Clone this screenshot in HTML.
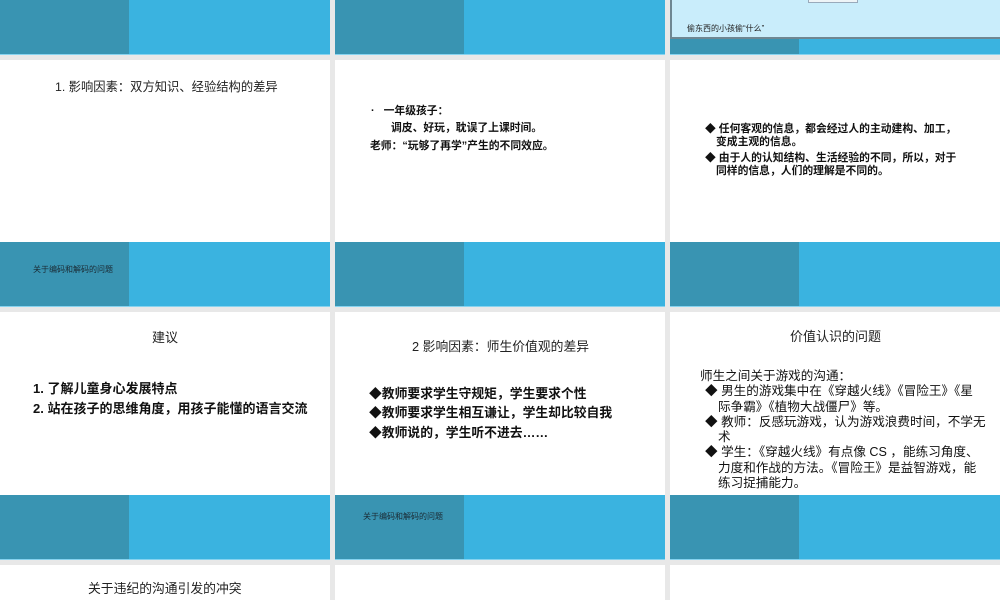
<!DOCTYPE html>
<html><head><meta charset="utf-8"><style>
*{margin:0;padding:0;box-sizing:border-box}
body{width:1000px;height:600px;overflow:hidden;background:#e8e8e8;position:relative;font-family:"Liberation Sans","Noto Sans CJK SC",sans-serif;color:#111}
.s{position:absolute;background:#fff;overflow:hidden}
.bar{position:absolute;left:0;width:330px;background:#3ab3e0;border-bottom:1px solid #86d3ef}
.bar .d{position:absolute;left:0;top:0;bottom:0;width:129px;background:#3994b2}
.t{position:absolute;white-space:nowrap;line-height:1}
.b{font-weight:bold}
</style></head><body>
<!-- row 1 -->
<div class="s" style="left:0;top:0;width:330px;height:55px"><div class="bar" style="top:0;height:55px"><div class="d"></div></div></div>
<div class="s" style="left:335px;top:0;width:330px;height:55px"><div class="bar" style="top:0;height:55px"><div class="d"></div></div></div>
<div class="s" style="left:670px;top:0;width:330px;height:55px"><div class="bar" style="top:0;height:55px"><div class="d"></div></div>
 <div style="position:absolute;left:0;top:0;width:330px;height:39px;background:#c9edfb;border-left:2px solid #6f8792;border-bottom:2px solid #6f8792"></div>
 <div style="position:absolute;left:138px;top:-1px;width:50px;height:4px;background:#eef4f7;border:1px solid #9ab"></div>
 <div class="t" style="left:17px;top:25px;font-size:8px;color:#222">偷东西的小孩偷“什么”</div>
</div>
<!-- row 2 -->
<div class="s" style="left:0;top:60px;width:330px;height:247px">
 <div class="t" style="left:55px;top:21px;font-size:12.3px;color:#222">1. 影响因素：双方知识、经验结构的差异</div>
 <div class="bar" style="top:182px;height:65px"><div class="d"></div></div>
 <div class="t" style="left:33px;top:206px;font-size:8px;color:#1a2a33">关于编码和解码的问题</div>
</div>
<div class="s" style="left:335px;top:60px;width:330px;height:247px">
 <div class="t b" style="left:36px;top:46px;font-size:10.8px">·&nbsp;&nbsp; 一年级孩子：</div>
 <div class="t b" style="left:56px;top:63px;font-size:10.8px">调皮、好玩，耽误了上课时间。</div>
 <div class="t b" style="left:35px;top:81px;font-size:10.8px">老师：“玩够了再学”产生的不同效应。</div>
 <div class="bar" style="top:182px;height:65px"><div class="d"></div></div>
</div>
<div class="s" style="left:670px;top:60px;width:330px;height:247px">
 <div class="t b" style="left:35px;top:64px;font-size:10.8px">◆ 任何客观的信息，都会经过人的主动建构、加工，</div>
 <div class="t b" style="left:46px;top:77px;font-size:10.8px">变成主观的信息。</div>
 <div class="t b" style="left:35px;top:93px;font-size:10.8px">◆ 由于人的认知结构、生活经验的不同，所以，对于</div>
 <div class="t b" style="left:46px;top:106px;font-size:10.8px">同样的信息，人们的理解是不同的。</div>
 <div class="bar" style="top:182px;height:65px"><div class="d"></div></div>
</div>
<!-- row 3 -->
<div class="s" style="left:0;top:312px;width:330px;height:248px">
 <div class="t" style="left:152px;top:19px;font-size:13px;color:#222">建议</div>
 <div class="t b" style="left:33px;top:70px;font-size:13px">1. 了解儿童身心发展特点</div>
 <div class="t b" style="left:33px;top:90px;font-size:13px">2. 站在孩子的思维角度，用孩子能懂的语言交流</div>
 <div class="bar" style="top:183px;height:65px"><div class="d"></div></div>
</div>
<div class="s" style="left:335px;top:312px;width:330px;height:248px">
 <div class="t" style="left:77px;top:29px;font-size:12.8px;color:#222">2 影响因素：师生价值观的差异</div>
 <div class="t b" style="left:34px;top:76px;font-size:12.8px">◆教师要求学生守规矩，学生要求个性</div>
 <div class="t b" style="left:34px;top:95px;font-size:12.8px">◆教师要求学生相互谦让，学生却比较自我</div>
 <div class="t b" style="left:34px;top:115px;font-size:12.8px">◆教师说的，学生听不进去……</div>
 <div class="bar" style="top:183px;height:65px"><div class="d"></div></div>
 <div class="t" style="left:28px;top:201px;font-size:8px;color:#1a2a33">关于编码和解码的问题</div>
</div>
<div class="s" style="left:670px;top:312px;width:330px;height:248px">
 <div class="t" style="left:120px;top:18px;font-size:13px;color:#222">价值认识的问题</div>
 <div style="position:absolute;left:30px;top:57px;width:300px;font-size:12.6px;line-height:15.3px;color:#111">
  <div style="white-space:nowrap">师生之间关于游戏的沟通：</div>
  <div style="padding-left:18px;text-indent:-13px;white-space:nowrap">◆ 男生的游戏集中在《穿越火线》《冒险王》《星<br>际争霸》《植物大战僵尸》等。</div>
  <div style="padding-left:18px;text-indent:-13px;white-space:nowrap">◆ 教师：反感玩游戏，认为游戏浪费时间，不学无<br>术</div>
  <div style="padding-left:18px;text-indent:-13px;white-space:nowrap">◆ 学生：《穿越火线》有点像 CS ，能练习角度、<br>力度和作战的方法。《冒险王》是益智游戏，能<br>练习捉捕能力。</div>
 </div>
 <div class="bar" style="top:183px;height:65px"><div class="d"></div></div>
</div>
<!-- row 4 -->
<div class="s" style="left:0;top:565px;width:330px;height:35px">
 <div class="t" style="left:88px;top:18px;font-size:12.8px;color:#222">关于违纪的沟通引发的冲突</div>
</div>
<div class="s" style="left:335px;top:565px;width:330px;height:35px"></div>
<div class="s" style="left:670px;top:565px;width:330px;height:35px"></div>
</body></html>
